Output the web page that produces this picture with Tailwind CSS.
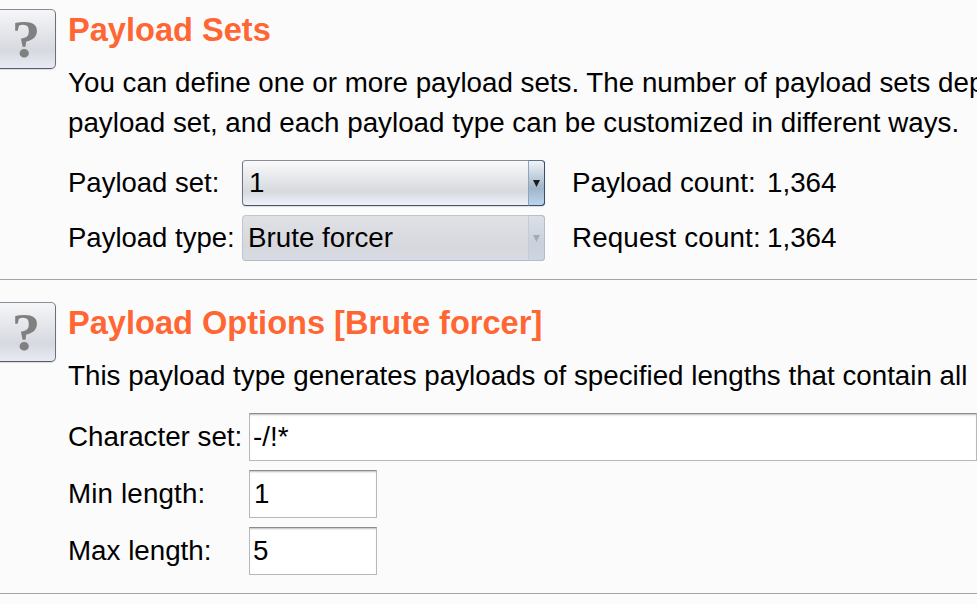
<!DOCTYPE html>
<html lang="en">
<head>
    <meta charset="UTF-8">
    <title>Payloads</title>
    <script src="https://cdn.jsdelivr.net/npm/@tailwindcss/browser@4"></script>
</head>
<body class="w-[977px] h-[604px] overflow-hidden bg-[#fbfbfb] text-black font-['Liberation_Sans',Arial,sans-serif] text-[27.75px] leading-10 whitespace-nowrap">
    <!-- Payload sets -->
    <section class="flex h-[280px] border-b border-[#a3a5aa]">
        <button class="mt-[9px] w-14 h-[60px] shrink-0 flex items-center justify-center pr-[3px] pt-0.5 rounded-r-[5px] border border-l-0 border-[#8a8d97] border-b-[#565b6c] border-r-[#6b7080] shadow-[0_1px_1px_#dcdde0] bg-linear-to-b from-[#f6f6f8] from-0% via-[#d6d9df] via-70% to-[#e8ebf3] font-['Liberation_Serif',serif] font-bold text-[52px] text-[#808080]"><span class="scale-x-110">?</span></button>
        <div class="flex-1 min-w-0 overflow-hidden pl-3 pt-[10px]">
            <h2 class="text-[32.6px] font-bold text-[#ff6633]">Payload Sets</h2>
            <p class="mt-[13px]">You can define one or more payload sets. The number of payload sets depends<br>payload set, and each payload type can be customized in different ways.</p>
            <div class="mt-[17px] grid grid-cols-[174px_330px_195px_auto] gap-y-[9px] leading-[46px]">
                <label class="text-[27.5px]">Payload set:</label>
                <div class="w-[303px] h-[46px] flex rounded-[4px] border border-[#8a8d97] border-b-[#4c5162] border-l-[#6f7381] border-r-[#33506f] shadow-[0_1px_1px_#dcdde0] bg-linear-to-b from-[#fafafb] from-0% via-[#d6d9de] via-70% to-[#eff2fb]">
                    <span class="flex-1 pl-1.5 leading-11">1</span>
                    <span class="w-[17px] -my-px -mr-px flex items-center justify-center rounded-r-[4px] border border-[#33506f] border-l-[#8da4ba] border-t-[#57718c] bg-linear-to-b from-[#f0f4f7] from-0% via-[#9fb5ca] via-62% to-[#bcd5ec]"><svg class="w-[7px] h-[7px]" viewBox="0 0 7 7"><path d="M0 0h7L3.5 7z" fill="#1c1c1c"/></svg></span>
                </div>
                <span>Payload count:</span><span>1,364</span>
                <label class="text-[27.5px]">Payload type:</label>
                <div class="w-[303px] h-[46px] flex rounded-[4px] border border-[#c3c5cc] border-b-[#b6bac4] bg-linear-to-b from-[#e0e1e5] via-[#d6d8de] via-70% to-[#d8dbe3]">
                    <span class="flex-1 pl-[5px] leading-11">Brute forcer</span>
                    <span class="w-[17px] -my-px -mr-px flex items-center justify-center rounded-r-[4px] border border-[#b4bdca] border-l-[#c5ccd6] bg-linear-to-b from-[#dce0e7] via-[#cad1dc] via-62% to-[#cdd5e1]"><svg class="w-[7px] h-[7px]" viewBox="0 0 7 7"><path d="M0 0h7L3.5 7z" fill="#a5abb4"/></svg></span>
                </div>
                <span class="tracking-[0.15px]">Request count:</span><span>1,364</span>
            </div>
        </div>
    </section>

    <!-- Payload options -->
    <section class="flex h-[314px] border-b border-[#a3a5aa]">
        <button class="mt-[22px] w-14 h-[60px] shrink-0 flex items-center justify-center pr-[3px] pt-0.5 rounded-r-[5px] border border-l-0 border-[#8a8d97] border-b-[#565b6c] border-r-[#6b7080] shadow-[0_1px_1px_#dcdde0] bg-linear-to-b from-[#f6f6f8] from-0% via-[#d6d9df] via-70% to-[#e8ebf3] font-['Liberation_Serif',serif] font-bold text-[52px] text-[#808080]"><span class="scale-x-110">?</span></button>
        <div class="flex-1 min-w-0 overflow-hidden pl-3 pt-[23px]">
            <h2 class="text-[32.6px] font-bold text-[#ff6633]">Payload Options [Brute forcer]</h2>
            <p class="mt-[13px]">This payload type generates payloads of specified lengths that contain all</p>
            <div class="mt-[17px] grid grid-cols-[181px_1fr] gap-y-[9px] leading-[48px]">
                <label>Character set:</label>
                <div class="h-12 border border-[#b8b8b8] border-t-[#8c8c8c] bg-white shadow-[inset_0_2px_2px_-1px_#bdbdbd] pl-[3px] leading-[46px]">-/!*</div>
                <label class="tracking-[0.15px]">Min length:</label>
                <div class="w-32 h-12 border border-[#b8b8b8] border-t-[#8c8c8c] bg-white shadow-[inset_0_2px_2px_-1px_#bdbdbd] pl-1 leading-[46px]">1</div>
                <label>Max length:</label>
                <div class="w-32 h-12 border border-[#b8b8b8] border-t-[#8c8c8c] bg-white shadow-[inset_0_2px_2px_-1px_#bdbdbd] pl-[3px] leading-[46px]">5</div>
            </div>
        </div>
    </section>
</body>
</html>
